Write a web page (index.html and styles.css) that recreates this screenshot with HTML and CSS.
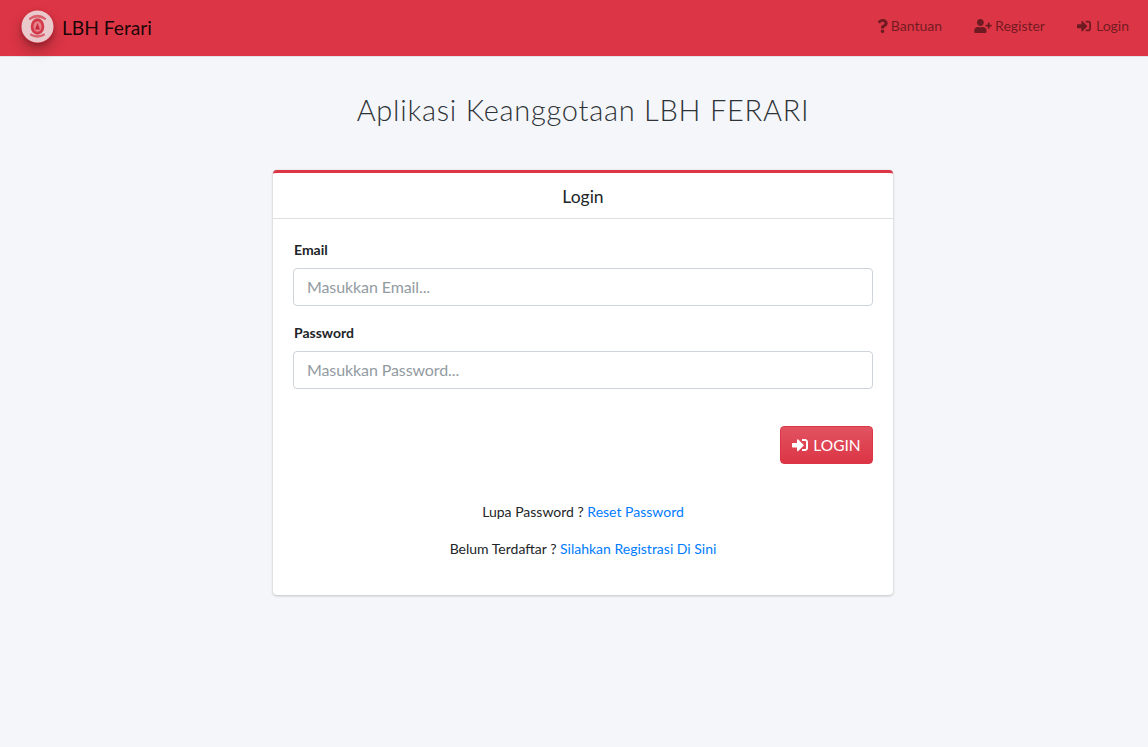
FILE: index.html
```html
<!DOCTYPE html>
<html lang="id">
<head>
<meta charset="utf-8">
<title>Aplikasi Keanggotaan LBH FERARI</title>
<link rel="stylesheet" href="styles.css">
</head>
<body>
<nav class="navbar">
  <a class="brand" href="#">
    <svg class="logo" viewBox="0 0 34 34" aria-hidden="true">
      <circle cx="17" cy="17" r="16.5" fill="#e9c9cc"/>
      <path d="M8 8.5 Q17 1.5 26 8.5 L25 10.5 Q17 5 9 10.5 Z" fill="#d9606c"/>
      <path d="M9 26 Q17 31 25 26 L24 24 Q17 28 10 24 Z" fill="#d9606c"/>
      <ellipse cx="17" cy="17" rx="7" ry="8.5" fill="#d23a4a"/>
      <ellipse cx="17" cy="17" rx="4.2" ry="5.4" fill="#e6818b"/>
      <path d="M17 13.5 L19.6 20 H14.4 Z" fill="#c8283a"/>
    </svg>
    <span class="brand-name">LBH Ferari</span>
  </a>
  <ul class="nav-links">
    <li><a href="#">
      <svg class="ic ic-q" viewBox="0 0 384 512" aria-hidden="true"><path d="M202 0C122 0 70 33 29 92c-8 11-5 26 6 34l43 33c11 8 26 6 35-4 25-32 44-50 84-50 31 0 70 20 70 50 0 23-19 35-50 52-36 20-84 46-84 109v10c0 13 11 24 24 24h72c13 0 24-11 24-24v-6c0-44 128-46 128-164C381 67 289 0 202 0zm-10 381c-36 0-65 29-65 65s29 66 65 66 65-30 65-66-29-65-65-65z"/></svg>
      Bantuan</a></li>
    <li><a href="#">
      <svg class="ic ic-user" viewBox="0 0 640 512" aria-hidden="true"><path d="M624 208h-64v-64c0-9-7-16-16-16h-32c-9 0-16 7-16 16v64h-64c-9 0-16 7-16 16v32c0 9 7 16 16 16h64v64c0 9 7 16 16 16h32c9 0 16-7 16-16v-64h64c9 0 16-7 16-16v-32c0-9-7-16-16-16zM224 256c71 0 128-57 128-128S295 0 224 0 96 57 96 128s57 128 128 128zm90 32h-17c-22 10-47 16-73 16s-51-6-73-16h-17C60 288 0 348 0 422v42c0 26 22 48 48 48h352c26 0 48-22 48-48v-42c0-74-60-134-134-134z"/></svg>
      Register</a></li>
    <li><a href="#">
      <svg class="ic ic-login" viewBox="0 0 512 512" aria-hidden="true"><path d="M416 448h-84c-7 0-12-5-12-12v-40c0-7 5-12 12-12h84c18 0 32-14 32-32V160c0-18-14-32-32-32h-84c-7 0-12-5-12-12V76c0-7 5-12 12-12h84c53 0 96 43 96 96v192c0 53-43 96-96 96zm-47-201L201 79c-15-15-41-4-41 17v96H24c-13 0-24 11-24 24v96c0 13 11 24 24 24h136v96c0 21 26 32 41 17l168-168c9-10 9-24 0-34z"/></svg>
      Login</a></li>
  </ul>
</nav>

<main class="content">
  <h1 class="title">Aplikasi Keanggotaan LBH FERARI</h1>
  <section class="card">
    <header class="card-header">Login</header>
    <form class="card-body">
      <div class="field">
        <label class="label" for="email">Email</label>
        <input class="input" id="email" type="text" placeholder="Masukkan Email...">
      </div>
      <div class="field">
        <label class="label" for="password">Password</label>
        <input class="input" id="password" type="password" placeholder="Masukkan Password...">
      </div>
      <div class="actions">
        <button class="btn" type="button">
          <svg class="ic-btn" viewBox="0 0 512 512" aria-hidden="true"><path d="M416 448h-84c-7 0-12-5-12-12v-40c0-7 5-12 12-12h84c18 0 32-14 32-32V160c0-18-14-32-32-32h-84c-7 0-12-5-12-12V76c0-7 5-12 12-12h84c53 0 96 43 96 96v192c0 53-43 96-96 96zm-47-201L201 79c-15-15-41-4-41 17v96H24c-13 0-24 11-24 24v96c0 13 11 24 24 24h136v96c0 21 26 32 41 17l168-168c9-10 9-24 0-34z"/></svg>
          LOGIN</button>
      </div>
      <p class="note">Lupa Password ? <a href="#">Reset Password</a></p>
      <p class="note">Belum Terdaftar ? <a href="#">Silahkan Registrasi Di Sini</a></p>
    </form>
  </section>
</main>
</body>
</html>
```
FILE: styles.css
```css
* { box-sizing: border-box; }
html, body { height: 100%; }
body {
  margin: 0;
  background: #f4f6f9;
  color: #212529;
  font-family: "Lato", "Noto Sans", sans-serif;
  font-size: 14px;
  overflow: hidden;
}
a { text-decoration: none; }

.navbar {
  height: 57px;
  background: #dc3545;
  border-bottom: 1px solid #dee2e6;
  display: flex;
  align-items: center;
  justify-content: space-between;
  padding: 0 9px 3px 21px;
}
.brand { display: flex; align-items: center; gap: 9px; color: rgba(0,0,0,.9); }
.logo {
  width: 33px;
  height: 33px;
  border-radius: 50%;
  box-shadow: 0 8px 14px rgba(0,0,0,.24), 0 2px 4px rgba(0,0,0,.2);
}
.brand-name { font-size: 19.2px; line-height: 27px; padding-top: 2px; margin-left: -1px; }
.nav-links { display: flex; list-style: none; margin: 0 0 2px; padding: 0; }
.nav-links a {
  display: flex;
  align-items: center;
  gap: 3px;
  padding: 0 10px;
  margin-left: 12px;
  height: 40px;
  color: rgba(0,0,0,.5);
  font-size: 14px;
}
.ic { height: 14px; fill: rgba(0,0,0,.5); }
.ic-q { width: 11px; }
.ic-user { width: 18px; }
.ic-login { width: 14px; margin-right: 2px; }

.content { display: flex; flex-direction: column; align-items: center; padding-left: 18px; }
.title {
  margin: 36px 0 0;
  height: 77px;
  font-family: "Lato", sans-serif;
  font-size: 29px;
  font-weight: 300;
  line-height: 34px;
  color: #2e3338;
  letter-spacing: .75px;
}
.card {
  width: 620px;
  background: #fff;
  border-radius: 4px;
  border-top: 3px solid #dc3545;
  box-shadow: 0 0 1px rgba(0,0,0,.13), 0 1px 3px rgba(0,0,0,.2);
}
.card-header {
  height: 46px;
  padding-top: 2px;
  border-bottom: 1px solid rgba(0,0,0,.125);
  display: flex;
  align-items: center;
  justify-content: center;
  font-size: 17.5px;
  color: #212529;
}
.card-body { padding: 20px 20px 20px; }
.field { margin-bottom: 16px; }
.label {
  display: block;
  height: 21px;
  margin-bottom: 8px;
  padding-left: 1px;
  font-size: 14px;
  line-height: 21px;
  font-weight: 700;
}
.input {
  display: block;
  width: 100%;
  height: 38px;
  padding: 4px 13px 6px;
  border: 1px solid #ced4da;
  border-radius: 4px;
  background: #fff;
  font: inherit;
  font-size: 16px;
  color: #495057;
  outline: 0;
}
.input::placeholder { color: #939ba2; opacity: 1; letter-spacing: -.1px; }
.actions { display: flex; justify-content: flex-end; margin-top: 37px; margin-bottom: 37px; }
.btn {
  display: flex;
  align-items: center;
  gap: 5px;
  width: 93px;
  justify-content: center;
  height: 38px;
  padding: 0;
  border: 1px solid #dc3545;
  border-radius: 4px;
  background: linear-gradient(180deg, #e15361, #dc3545);
  color: #fff;
  font: inherit;
  font-size: 15.5px;
}
.ic-btn { width: 16px; height: 16px; fill: #fff; }
.note {
  margin: 0 0 16px;
  height: 21px;
  line-height: 21px;
  text-align: center;
  font-size: 14px;
  color: #212529;
}
.note a { color: #007bff; }
```
